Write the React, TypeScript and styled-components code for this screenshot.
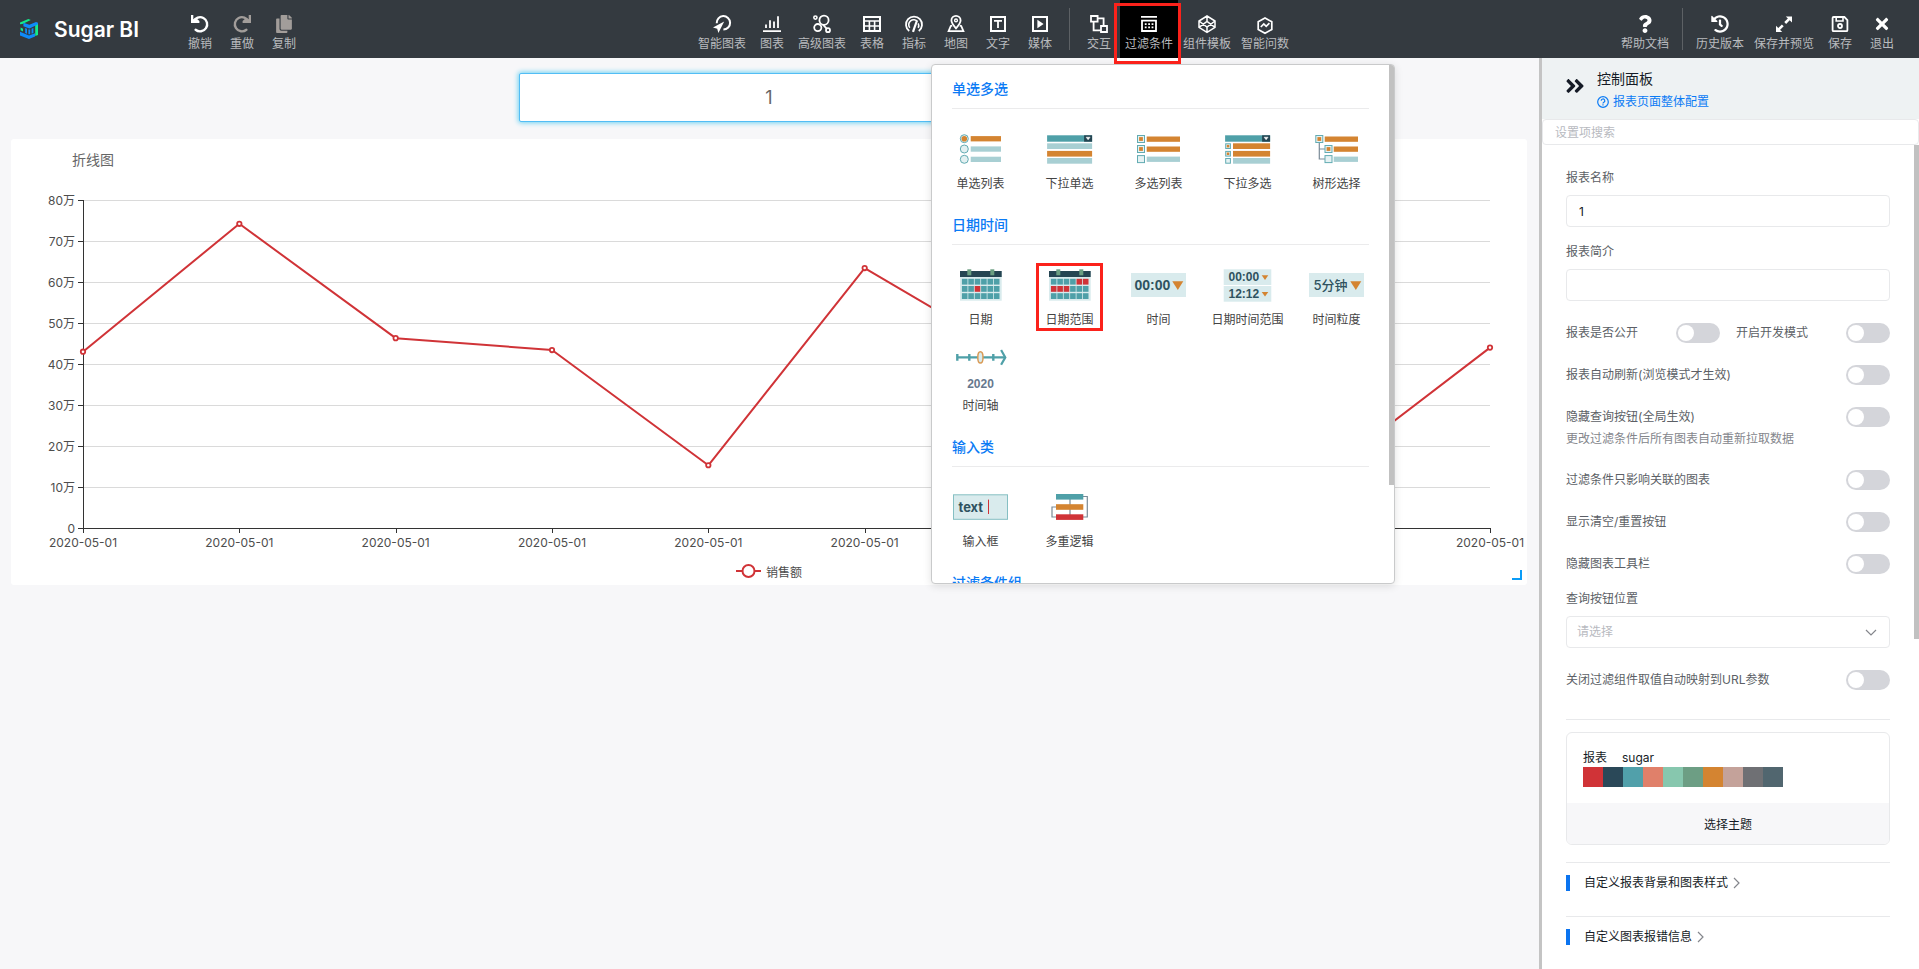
import React, { useEffect, useRef, useState } from 'react';
import styled, { createGlobalStyle } from 'styled-components';
import { FaAngleDoubleRight, FaCopy, FaHistory, FaQuestion, FaTimes } from 'react-icons/fa';

const color = {
  bar: '#343a40',
  canvas: '#f7f7f9',
  blue: '#0b7bf5',
  red: '#fb221b',
  line: '#e8e9eb',
  teal: '#4fa0a8',
  pale: '#a8cfd3',
  ice: '#d9ebed',
  orange: '#d48431',
  navy: '#254552',
  brick: '#d03337',
};

const GlobalStyle = createGlobalStyle`
  *, *::before, *::after { box-sizing: border-box; }
  body {
    margin: 0;
    font-family: Inter, "Noto Sans CJK SC", sans-serif;
    font-size: 12px;
    color: #151b26;
    background: ${color.canvas};
  }
  button, input, select { font: inherit; color: inherit; }
  h1, h2, h3, p { margin: 0; font-weight: 400; }
`;

/* ---------- page frame ---------- */

const Page = styled.div`
  display: flex;
  flex-direction: column;
  height: 100vh;
`;

const Toolbar = styled.header`
  display: flex;
  flex: none;
  height: 58px;
  padding-right: 16px;
  background: ${color.bar};
`;

const Brand = styled.div`
  display: flex;
  align-items: center;
  gap: 15px;
  min-width: 179px;
  padding-left: 19px;
`;

const BrandName = styled.h1`
  font-size: 21px;
  font-weight: 600;
  color: #fff;
`;

const ToolGroup = styled.nav<{ $center?: boolean }>`
  display: flex;
  margin: ${(p) => (p.$center ? '0 auto' : '0')};
  padding-left: ${(p) => (p.$center ? '66px' : '0')};
`;

const ToolButton = styled.button<{ $active?: boolean; $dim?: boolean }>`
  display: flex;
  flex-direction: column;
  align-items: center;
  gap: 3px;
  min-width: 42px;
  height: 58px;
  padding: 15px 5px 0;
  border: 0;
  background: ${(p) => (p.$active ? '#000' : 'transparent')};
  color: ${(p) => (p.$dim ? '#a29d9a' : '#fff')};
  cursor: pointer;
  svg { display: block; overflow: visible; }
`;

const ToolLabel = styled.span`
  line-height: 16px;
  white-space: nowrap;
  color: #b9bbbe;
`;

const ToolDivider = styled.span`
  width: 1px;
  height: 42px;
  margin: 8px;
  background: #5d6165;
`;

const Anchor = styled.div`
  position: relative;
`;

const ToolMarker = styled.span`
  position: absolute;
  z-index: 3;
  inset: 3px -3px -6px -6px;
  border: 3px solid ${color.red};
  box-shadow: inset 0 -3px #fff;
  pointer-events: none;
`;

const Body = styled.div`
  display: flex;
  flex: 1;
  min-height: 0;
`;

/* ---------- canvas ---------- */

const Canvas = styled.main`
  flex: 1;
  min-width: 0;
  padding: 15px 12px 0 11px;
`;

const TitleInput = styled.input`
  display: block;
  width: 500px;
  height: 49px;
  margin: 0 auto 17px;
  border: 1px solid #52bdf5;
  border-radius: 2px;
  outline: 0;
  background: #fff;
  box-shadow: 0 0 5px 1px #6fd3f2;
  font-size: 18px;
  text-align: center;
  color: #666;
`;

const ChartCard = styled.section`
  position: relative;
  padding-bottom: 4px;
  border-radius: 3px;
  background: #fff;
`;

const ChartTitle = styled.h2`
  padding: 10px 61px 0;
  font-size: 14px;
  line-height: 22px;
  color: #666;
`;

const Plot = styled.div`
  height: 390px;
  svg { display: block; }
`;

const Legend = styled.div`
  display: flex;
  align-items: center;
  justify-content: center;
  gap: 5px;
  height: 20px;
  color: #4d4d4d;
`;

const ResizeCorner = styled.span`
  position: absolute;
  right: 5px;
  bottom: 5px;
  width: 10px;
  height: 10px;
  border: solid #0a9cf7;
  border-width: 0 2px 2px 0;
`;

const AXIS_LEFT = 72;
const AXIS_RIGHT = 37;
const AXIS_TOP = 29;
const STEP = 41;
const VALUES = [43, 74.2, 46.3, 43.4, 15.3, 63.4, 41, 26, 14.8, 44];

function LineChart() {
  const box = useRef<HTMLDivElement>(null);
  const [width, setWidth] = useState(1516);

  useEffect(() => {
    const el = box.current;
    if (!el) return;
    const read = () => setWidth(el.clientWidth);
    read();
    const observer = new ResizeObserver(read);
    observer.observe(el);
    return () => observer.disconnect();
  }, []);

  const bottom = AXIS_TOP + STEP * 8;
  const right = width - AXIS_RIGHT;
  const xOf = (i: number) => AXIS_LEFT + ((right - AXIS_LEFT) * i) / (VALUES.length - 1);
  const yOf = (v: number) => bottom - (v * STEP) / 10;
  const crisp = (n: number) => Math.round(n) + 0.5;
  const points = VALUES.map((v, i) => `${xOf(i)},${yOf(v)}`).join(' ');

  return (
    <Plot ref={box}>
      <svg width={width} height={390} fontSize={12} fill="#4d4d4d" role="img" aria-label="折线图">
        {Array.from({ length: 9 }, (_, i) => {
          const y = bottom - i * STEP + 0.5;
          return (
            <g key={i}>
              {i > 0 && <line x1={AXIS_LEFT} x2={right} y1={y} y2={y} stroke="#dadada" />}
              <line x1={AXIS_LEFT - 5} x2={AXIS_LEFT} y1={y} y2={y} stroke="#333" />
              <text x={AXIS_LEFT - 8} y={y + 4} textAnchor="end">{i ? `${i * 10}万` : '0'}</text>
            </g>
          );
        })}
        <line x1={AXIS_LEFT + 0.5} x2={AXIS_LEFT + 0.5} y1={AXIS_TOP} y2={bottom} stroke="#333" />
        <line x1={AXIS_LEFT} x2={right + 1} y1={bottom + 0.5} y2={bottom + 0.5} stroke="#333" />
        {VALUES.map((_, i) => (
          <g key={i}>
            <line x1={crisp(xOf(i))} x2={crisp(xOf(i))} y1={bottom} y2={bottom + 5} stroke="#333" />
            <text x={xOf(i)} y={bottom + 19} textAnchor="middle">2020-05-01</text>
          </g>
        ))}
        <polyline points={points} fill="none" stroke={color.brick} strokeWidth={2} strokeLinejoin="bevel" />
        {VALUES.map((v, i) => (
          <circle key={i} cx={xOf(i)} cy={yOf(v)} r={2.2} fill="#fff" stroke={color.brick} strokeWidth={1.8} />
        ))}
      </svg>
    </Plot>
  );
}

/* ---------- toolbar icons ---------- */

function Icon({ children }: { children: React.ReactNode }) {
  return (
    <svg width={18} height={18} viewBox="0 0 18 18" fill="none" stroke="currentColor" strokeWidth={2} aria-hidden>
      {children}
    </svg>
  );
}

const icons = {
  undo: (
    <Icon>
      <path d="M2.5 6.6A7.1 7.1 0 1 1 4.6 14.8" strokeWidth={2.4} strokeLinecap="round" />
      <path d="M0 0h2.3v4.2L5.6 3.4 8.4 6v2H0z" fill="currentColor" stroke="none" />
    </Icon>
  ),
  redo: (
    <Icon>
      <path d="M15.5 6.6A7.1 7.1 0 1 0 13.4 14.8" strokeWidth={2.4} strokeLinecap="round" />
      <path d="M18 0h-2.3v4.2L12.4 3.4 9.6 6v2H18z" fill="currentColor" stroke="none" />
    </Icon>
  ),
  smart: (
    <Icon>
      <path d="M3.7 8.2a6.7 6.7 0 1 1 6.7 6.3" />
      <path d="M11.2 6.4 0 12.6l4.2 1.2L5.4 18z" fill="currentColor" stroke="none" />
    </Icon>
  ),
  chart: (
    <Icon>
      <path d="M0 16.2h18M3 9.6V13M7 5.2V13M11 6.6V13M15 1.2V13" strokeWidth={1.8} />
    </Icon>
  ),
  advanced: (
    <Icon>
      <circle cx="2.4" cy="2.6" r="1.6" strokeWidth={1.6} />
      <circle cx="11" cy="5.2" r="4.6" strokeWidth={1.8} />
      <circle cx="4.8" cy="12.6" r="3.6" strokeWidth={1.8} />
      <circle cx="15" cy="15.2" r="2" strokeWidth={1.8} />
      <path d="m10 9.6 3.6 4" strokeWidth={1.8} />
    </Icon>
  ),
  table: (
    <Icon>
      <path d="M1 2h16v14H1z" />
      <path d="M1 6h16M1 11h16M6.4 6v10M11.6 6v10" strokeWidth={1.6} />
    </Icon>
  ),
  gauge: (
    <Icon>
      <path d="M4.2 16A8 8 0 1 1 13.8 16" strokeWidth={1.8} />
      <path d="M4.8 12.8A4.8 4.8 0 0 1 12.6 6.6M13.2 8.4a5 5 0 0 1 0 4.4" strokeWidth={1.6} />
      <path d="M8 16.8 11.8 6" strokeWidth={2.2} />
    </Icon>
  ),
  map: (
    <Icon>
      <path d="M9 13.4C6 9.8 4.4 7.6 4.4 5.4a4.6 4.6 0 0 1 9.2 0c0 2.2-1.6 4.4-4.6 8z" strokeWidth={1.8} />
      <circle cx="9" cy="5.4" r="1.4" strokeWidth={1.4} />
      <path d="M5.2 10.6 3.8 11 1.6 16.2h14.8L14.2 11l-1.4-.4" strokeWidth={1.8} />
    </Icon>
  ),
  text: (
    <Icon>
      <path d="M2 2h14v14H2z" />
      <path d="M5 5.8h8M9 5.8V13" strokeWidth={1.8} />
    </Icon>
  ),
  media: (
    <Icon>
      <path d="M2 2h14v14H2z" />
      <path d="M6.4 4.8 12.6 9l-6.2 4.2z" fill="currentColor" stroke="none" />
    </Icon>
  ),
  link: (
    <Icon>
      <path d="M1 1h6.6v5.6H1zM11 11h6v6h-6zM8 3.4h5.6V11M3.6 7v8.4H11" strokeWidth={1.8} />
    </Icon>
  ),
  filter: (
    <Icon>
      <path d="M1 1.9h16M2 5.6h14V16H2z" strokeWidth={1.8} />
      <path d="M4.8 9.2h8.6M4.8 12.4h8.6" strokeWidth={1.8} strokeDasharray="1.8 1.6" />
    </Icon>
  ),
  template: (
    <Icon>
      <path d="M9 1 17 6v6.4L9 17.4 1 12.4V6zM9 1v5.4M9 12v5M1 6l8 6 8-6M1 12.4l8-6 8 6" strokeWidth={1.5} />
    </Icon>
  ),
  ask: (
    <Icon>
      <path d="M9 3l6.8 3.8v7.6L9 18.2l-6.8-3.8V6.8z" strokeWidth={1.7} />
      <path d="m4.8 12 3-3 2.4 2.4 3.2-3.2" strokeWidth={1.7} />
    </Icon>
  ),
  expand: (
    <Icon>
      <path d="M10.8 1.4H17V7.6zM7.2 17H1v-6.2z" fill="currentColor" stroke="none" />
      <path d="m15 3.2-4.8 4.8M3 15.2l4.8-4.8" strokeWidth={2.6} />
    </Icon>
  ),
  save: (
    <Icon>
      <path d="M2.6 2h10.8l3 3v10.2q0 1-1 1H2.6q-1 0-1-1V3q0-1 1-1z" strokeWidth={1.8} />
      <path d="M5.2 2v4H12V2" strokeWidth={1.6} />
      <circle cx="9" cy="11" r="2" strokeWidth={1.8} />
    </Icon>
  ),
};

type Tool = { label: string; icon: React.ReactNode; dim?: boolean };

const editTools: Tool[] = [
  { label: '撤销', icon: icons.undo },
  { label: '重做', icon: icons.redo, dim: true },
  { label: '复制', icon: <FaCopy size={18} />, dim: true },
];

const insertTools: Tool[] = [
  { label: '智能图表', icon: icons.smart },
  { label: '图表', icon: icons.chart },
  { label: '高级图表', icon: icons.advanced },
  { label: '表格', icon: icons.table },
  { label: '指标', icon: icons.gauge },
  { label: '地图', icon: icons.map },
  { label: '文字', icon: icons.text },
  { label: '媒体', icon: icons.media },
];

const pageTools: Tool[] = [
  { label: '历史版本', icon: <FaHistory size={18} /> },
  { label: '保存并预览', icon: icons.expand },
  { label: '保存', icon: icons.save },
  { label: '退出', icon: <FaTimes size={18} /> },
];

function ToolItem({ tool, active }: { tool: Tool; active?: boolean }) {
  return (
    <ToolButton type="button" $dim={tool.dim} $active={active}>
      {tool.icon}
      <ToolLabel>{tool.label}</ToolLabel>
    </ToolButton>
  );
}

function Logo() {
  return (
    <svg width={20} height={20} viewBox="0 0 20 20" aria-hidden>
      <path d="M1 3.4 9.4 0l2.4 1L3.4 5 1 5.2z" fill="#12ea8c" />
      <path d="M16.2 5.6 19 4.4V16l-2.8 1z" fill="#12ea8c" />
      <path d="M1.6 8.6 4 9.8v2.6l-2.4-1.2z" fill="#12ea8c" />
      <path d="M4.4 3.8 10.4 5.8 17 3l2 .8-.2 1.8-8.4 4L4.4 7.2z" fill="#0f8bf9" />
      <path d="M1 12.8 10 16.6l6-2.4v3.4L10 20l-9-3.6z" fill="#0f8bf9" />
      <path d="M6.2 9 8 9.8v5l-1.800-.8zM9.400 10.400h1.800v4.800H9.400zM12.600 9.800l1.800-.8v5l-1.800.8z" fill="#0f8bf9" />
    </svg>
  );
}

/* ---------- filter menu ---------- */

const Menu = styled.div`
  position: absolute;
  z-index: 2;
  top: 64px;
  left: -189px;
  width: 464px;
  height: 520px;
  overflow: hidden;
  padding: 13px 25px 0 20px;
  border: 1px solid #c9cacb;
  border-radius: 4px;
  background: #fff;
  box-shadow: 0 2px 8px rgba(0, 0, 0, 0.12);
`;

const MenuThumb = styled.span`
  position: absolute;
  top: 0;
  right: 0;
  width: 5px;
  height: 81%;
  background: #c1c1c1;
`;

const MenuHeading = styled.h3`
  padding-bottom: 8px;
  border-bottom: 1px solid #ebebec;
  font-size: 14px;
  font-weight: 500;
  line-height: 22px;
  color: ${color.blue};
`;

const MenuGrid = styled.div`
  display: grid;
  grid-template-columns: repeat(5, 1fr);
  grid-auto-rows: 86px;
  margin: 13px -12px 6px -16px;
`;

const MenuItem = styled.button`
  position: relative;
  display: flex;
  flex-direction: column;
  align-items: center;
  gap: 5px;
  padding: 7px 0 0;
  border: 0;
  background: none;
  color: #444;
  line-height: 20px;
  cursor: pointer;
  svg { display: block; flex: none; overflow: visible; }
`;

const ItemMarker = styled.span`
  position: absolute;
  inset: 5px 11px 13px;
  border: 3px solid ${color.red};
  pointer-events: none;
`;

function Art({ children }: { children: React.ReactNode }) {
  return (
    <svg width={56} height={40} viewBox="-0.5 0 56 40" aria-hidden>
      {children}
    </svg>
  );
}

function Bar({ x, y, w, h = 5.3, fill }: { x: number; y: number; w: number; h?: number; fill: string }) {
  return <rect x={x} y={y} width={w} height={h} fill={fill} />;
}

function Tick({ x, y, size = 7, on }: { x: number; y: number; size?: number; on?: boolean }) {
  const inset = size * 0.23;
  return (
    <>
      <rect x={x} y={y} width={size} height={size} fill="#e6f2f3" stroke="#62abb2" />
      {on && <rect x={x + inset} y={y + inset} width={size - 2 * inset} height={size - 2 * inset} fill={color.orange} />}
    </>
  );
}

function SelectHead() {
  return (
    <>
      <Bar x={5.6} y={6.3} w={45} h={6.4} fill={color.teal} />
      <Bar x={42.6} y={6.3} w={8} h={6.4} fill={color.navy} />
      <path d="M44.6 8.2h4l-2 2.6z" fill="#fff" stroke="#fff" strokeWidth={0.5} />
    </>
  );
}

function Caret({ x, y, w, h }: { x: number; y: number; w: number; h: number }) {
  return <path d={`M${x} ${y}h${w}l${-w / 2} ${h}z`} fill={color.orange} />;
}

function CalendarArt({ marked }: { marked: number[] }) {
  return (
    <Art>
      <rect x={7.5} y={6} width={41.7} height={29.7} fill={color.ice} />
      <rect x={7.5} y={6} width={41.7} height={6} fill={color.navy} />
      <rect x={14.8} y={4.3} width={4} height={6} fill="#6b9f82" />
      <rect x={37.8} y={4.3} width={4} height={6} fill="#6b9f82" />
      {Array.from({ length: 18 }, (_, i) => (
        <rect
          key={i}
          x={9.4 + (i % 6) * 6.4}
          y={13.8 + Math.floor(i / 6) * 7.2}
          width={5.6}
          height={5.8}
          fill={marked.includes(i) ? color.brick : color.teal}
        />
      ))}
    </Art>
  );
}

const digits = { fontFamily: 'Liberation Sans, sans-serif', fontWeight: 700, fill: '#2f5260' };

const art = {
  radio: (
    <Art>
      {[9.7, 20, 30.3].map((y, i) => (
        <g key={y}>
          <circle cx={11.8} cy={y} r={4} fill="#e3f0f1" stroke="#62abb2" />
          {i === 0 && <circle cx={11.8} cy={y} r={2.8} fill={color.orange} />}
          <Bar x={18.2} y={y - 2.6} w={30.3} fill={i === 0 ? color.orange : color.pale} />
        </g>
      ))}
    </Art>
  ),
  select: (
    <Art>
      <SelectHead />
      <Bar x={5.6} y={14.3} w={45} h={5.7} fill={color.pale} />
      <Bar x={5.6} y={21.9} w={45} h={5.7} fill={color.orange} />
      <Bar x={5.6} y={29} w={45} h={5.7} fill={color.pale} />
    </Art>
  ),
  checks: (
    <Art>
      {[6.5, 16.5, 26.6].map((y, i) => (
        <g key={y}>
          <Tick x={7} y={y} on={i < 2} />
          <Bar x={16.2} y={y + 1} w={33.3} fill={i < 2 ? color.orange : color.pale} />
        </g>
      ))}
    </Art>
  ),
  multi: (
    <Art>
      <SelectHead />
      {[14.3, 21.9, 29].map((y, i) => (
        <g key={y}>
          <Tick x={6.2} y={y + 0.5} size={4.7} on={i < 2} />
          <Bar x={13.5} y={y} w={37.1} h={5.7} fill={i < 2 ? color.orange : color.pale} />
        </g>
      ))}
    </Art>
  ),
  tree: (
    <Art>
      <path d="M10.8 13v17h6M10.8 20h6" fill="none" stroke="#7a8b97" strokeWidth={1.2} />
      <Tick x={7.3} y={6.5} on />
      <Tick x={16.5} y={16.5} on />
      <Tick x={16.5} y={26.6} />
      <Bar x={16.2} y={7.5} w={33.3} fill={color.orange} />
      <Bar x={25.2} y={17.5} w={24.3} fill={color.orange} />
      <Bar x={25.2} y={27.6} w={24.3} fill={color.pale} />
    </Art>
  ),
  date: <CalendarArt marked={[8]} />,
  range: <CalendarArt marked={[4, 5, 6, 7, 8]} />,
  time: (
    <Art>
      <rect x={0.5} y={8} width={55} height={24} fill={color.ice} />
      <text x={4} y={25} fontSize={14} {...digits}>00:00</text>
      <Caret x={41.8} y={16.3} w={11} h={8.7} />
    </Art>
  ),
  timeRange: (
    <Art>
      <rect x={4.2} y={4.3} width={47.6} height={15.7} fill={color.ice} />
      <rect x={4.2} y={21} width={47.6} height={15.7} fill={color.ice} />
      <text x={9} y={16} fontSize={12} {...digits}>00:00</text>
      <text x={9} y={33} fontSize={12} {...digits}>12:12</text>
      <Caret x={42.2} y={10.3} w={6.6} h={4.6} />
      <Caret x={42.2} y={27} w={6.6} h={4.6} />
    </Art>
  ),
  grain: (
    <Art>
      <rect x={0.5} y={8} width={55} height={24} fill={color.ice} />
      <text x={5} y={25} fontSize={13} fontWeight={500} fill="#2f5260">5分钟</text>
      <Caret x={41.8} y={16.3} w={11} h={8.7} />
    </Art>
  ),
  axis: (
    <Art>
      <path d="M4 6.4h48M4.8 3v6.8M16.8 3v6.8M40.8 3v6.8" stroke={color.teal} strokeWidth={2.4} />
      <path d="m48.6-1 4.2 7.4-4.2 7.4" fill="none" stroke={color.teal} strokeWidth={2.2} />
      <ellipse cx={27.9} cy={6.4} rx={2.6} ry={5.6} fill={color.ice} stroke="#d99a55" strokeWidth={1.5} />
      <text x={28} y={37} fontSize={12} fontFamily="Liberation Sans, sans-serif" fontWeight={700} fill="#66788e" textAnchor="middle">2020</text>
    </Art>
  ),
  input: (
    <Art>
      <rect x={1} y={7.8} width={54} height={24.5} fill={color.ice} stroke="#85bfc3" />
      <text x={6} y={25} fontSize={13} fontWeight={700} fill="#2f5260">text</text>
      <path d="M36 12.6V27" stroke={color.brick} />
    </Art>
  ),
  logic: (
    <Art>
      <path d="M28.5 10v20M41 9.5h4.8V30H41M15 20h-4.5v10H15" fill="none" stroke="#7a8b97" strokeWidth={1.2} />
      <Bar x={14.5} y={7} w={27.3} h={5.6} fill={color.teal} />
      <Bar x={14.5} y={17.2} w={27.3} h={5.6} fill={color.orange} />
      <Bar x={14.5} y={27.3} w={27.3} h={5.6} fill={color.brick} />
    </Art>
  ),
};

type MenuSection = { title: string; items: { label: string; art: React.ReactNode; marked?: boolean }[] };

const menuSections: MenuSection[] = [
  {
    title: '单选多选',
    items: [
      { label: '单选列表', art: art.radio },
      { label: '下拉单选', art: art.select },
      { label: '多选列表', art: art.checks },
      { label: '下拉多选', art: art.multi },
      { label: '树形选择', art: art.tree },
    ],
  },
  {
    title: '日期时间',
    items: [
      { label: '日期', art: art.date },
      { label: '日期范围', art: art.range, marked: true },
      { label: '时间', art: art.time },
      { label: '日期时间范围', art: art.timeRange },
      { label: '时间粒度', art: art.grain },
      { label: '时间轴', art: art.axis },
    ],
  },
  {
    title: '输入类',
    items: [
      { label: '输入框', art: art.input },
      { label: '多重逻辑', art: art.logic },
    ],
  },
  { title: '过滤条件组', items: [] },
];

function FilterMenu() {
  return (
    <Menu>
      {menuSections.map((section) => (
        <section key={section.title}>
          <MenuHeading>{section.title}</MenuHeading>
          <MenuGrid>
            {section.items.map((item) => (
              <MenuItem type="button" key={item.label}>
                {item.art}
                {item.label}
                {item.marked && <ItemMarker />}
              </MenuItem>
            ))}
          </MenuGrid>
        </section>
      ))}
      <MenuThumb />
    </Menu>
  );
}

/* ---------- control panel ---------- */

const Panel = styled.aside`
  display: flex;
  flex: none;
  flex-direction: column;
  width: 380px;
  border-left: 3px solid #c4c4c4;
  background: #fff;
`;

const PanelHeader = styled.div`
  display: flex;
  align-items: flex-start;
  gap: 11px;
  height: 61px;
  padding: 10px 0 0 22px;
  background: #eef2f3;
`;

const CollapseButton = styled.button`
  display: flex;
  padding: 7px 0 0;
  border: 0;
  background: none;
  cursor: pointer;
`;

const PanelTitle = styled.h2`
  font-size: 14px;
  line-height: 22px;
`;

const HelpLink = styled.a`
  display: flex;
  align-items: center;
  gap: 4px;
  line-height: 24px;
  color: ${color.blue};
  text-decoration: none;
`;

const SearchInput = styled.input`
  flex: none;
  height: 26px;
  padding: 0 12px;
  border: 1px solid ${color.line};
  border-radius: 4px;
  outline: 0;
  &::placeholder { color: #b8babf; opacity: 1; }
`;

const PanelScroll = styled.div`
  display: flex;
  flex: 1;
  min-height: 0;
  overflow: hidden;
`;

const PanelThumb = styled.span`
  flex: none;
  width: 5px;
  height: 60%;
  background: #c1c1c1;
`;

const Form = styled.form`
  flex: 1;
  min-width: 0;
  padding: 22px 24px 0;
`;

const Field = styled.label`
  display: block;
  margin-bottom: 14px;
  padding-top: 1px;
  line-height: 20px;
  color: #5c5f66;
`;

const TextInput = styled.input`
  display: block;
  width: 100%;
  height: 32px;
  margin-top: 7px;
  padding: 0 12px;
  border: 1px solid ${color.line};
  border-radius: 4px;
  outline: 0;
  background: #fff;
  color: #151b26;
`;

const SelectBox = styled.span`
  position: relative;
  display: block;
  margin-top: 7px;
  svg {
    position: absolute;
    top: 13px;
    right: 13px;
    pointer-events: none;
  }
`;

const Select = styled.select`
  display: block;
  width: 100%;
  height: 32px;
  padding: 0 10px;
  border: 1px solid ${color.line};
  border-radius: 4px;
  appearance: none;
  background: #fff;
  color: #b8babf;
`;

const SwitchRows = styled.div`
  display: flex;
  flex-direction: column;
  gap: 22px;
  padding-top: 8px;
  padding-bottom: 14px;
`;

const SwitchPair = styled.div`
  display: grid;
  grid-template-columns: 1fr 1fr;
  gap: 16px;
`;

const SwitchLabel = styled.label`
  display: flex;
  align-items: center;
  justify-content: space-between;
  line-height: 20px;
  color: #5c5f66;
`;

const Hint = styled.p`
  margin: 2px 0 -1px;
  line-height: 20px;
  color: #84868c;
`;

const Switch = styled.input`
  appearance: none;
  width: 44px;
  height: 20px;
  margin: 0;
  padding: 2px;
  border-radius: 10px;
  background: #d4d5da;
  cursor: pointer;
  &::before {
    content: '';
    display: block;
    width: 16px;
    height: 16px;
    border-radius: 50%;
    background: #fff;
  }
  &:checked { background: ${color.blue}; }
  &:checked::before { margin-left: 24px; }
`;

const ThemeBlock = styled.section`
  margin-top: 15px;
  padding: 12px 0 17px;
  border-top: 1px solid ${color.line};
`;

const ThemeCard = styled.div`
  overflow: hidden;
  border: 1px solid ${color.line};
  border-radius: 6px;
`;

const ThemeInfo = styled.div`
  padding: 16px;
  line-height: 18px;
`;

const ThemeNames = styled.div`
  display: flex;
  gap: 15px;
`;

const Palette = styled.div`
  display: flex;
`;

const Swatch = styled.span<{ $fill: string }>`
  width: 20px;
  height: 20px;
  background: ${(p) => p.$fill};
`;

const ThemeButton = styled.button`
  display: block;
  width: 100%;
  height: 41px;
  border: 0;
  background: ${color.canvas};
  cursor: pointer;
`;

const Fold = styled.section`
  padding: 12px 0 25px;
  border-top: 1px solid ${color.line};
`;

const FoldButton = styled.button`
  display: flex;
  align-items: center;
  gap: 5px;
  height: 16px;
  padding: 0 0 0 14px;
  border: 0;
  border-left: 4px solid #0b74f0;
  background: none;
  line-height: 16px;
  cursor: pointer;
`;

const swatches = ['#d03337', '#2a4858', '#51a0aa', '#e0806a', '#87c7ae', '#6d9e84', '#d48431', '#c4a29a', '#6f7074', '#51666f'];

function SwitchField({ label }: { label: string }) {
  return (
    <SwitchLabel>
      {label}
      <Switch type="checkbox" role="switch" />
    </SwitchLabel>
  );
}

function FoldSection({ title }: { title: string }) {
  return (
    <Fold>
      <FoldButton type="button">
        {title}
        <svg width={7} height={12} viewBox="0 0 7 12" fill="none" stroke="#84868c" strokeWidth={1.2} aria-hidden>
          <path d="m1 1 5 5-5 5" />
        </svg>
      </FoldButton>
    </Fold>
  );
}

function ControlPanel() {
  return (
    <Panel>
      <PanelHeader>
        <CollapseButton type="button" aria-label="收起">
          <FaAngleDoubleRight size={22} />
        </CollapseButton>
        <div>
          <PanelTitle>控制面板</PanelTitle>
          <HelpLink href="#help">
            <svg width={12} height={12} viewBox="0 0 12 12" fill="none" stroke="currentColor" strokeWidth={1.2} aria-hidden>
              <circle cx="6" cy="6" r="5.3" />
              <path d="M4.2 4.8a1.8 1.8 0 1 1 2.7 1.500q-.9.5-.9 1.200" />
              <path d="M6 8.2v1.3" />
            </svg>
            报表页面整体配置
          </HelpLink>
        </div>
      </PanelHeader>
      <SearchInput type="search" placeholder="设置项搜索" aria-label="设置项搜索" />
      <PanelScroll>
        <Form>
          <Field>
            报表名称
            <TextInput defaultValue="1" />
          </Field>
          <Field>
            报表简介
            <TextInput />
          </Field>
          <SwitchRows>
            <SwitchPair>
              <SwitchField label="报表是否公开" />
              <SwitchField label="开启开发模式" />
            </SwitchPair>
            <SwitchField label="报表自动刷新(浏览模式才生效)" />
            <div>
              <SwitchField label="隐藏查询按钮(全局生效)" />
              <Hint>更改过滤条件后所有图表自动重新拉取数据</Hint>
            </div>
            <SwitchField label="过滤条件只影响关联的图表" />
            <SwitchField label="显示清空/重置按钮" />
            <SwitchField label="隐藏图表工具栏" />
          </SwitchRows>
          <Field>
            查询按钮位置
            <SelectBox>
              <Select defaultValue="">
                <option value="">请选择</option>
              </Select>
              <svg width={12} height={7} viewBox="0 0 12 7" fill="none" stroke="#84868c" strokeWidth={1.2} aria-hidden>
                <path d="m1 1 5 5 5-5" />
              </svg>
            </SelectBox>
          </Field>
          <SwitchRows>
            <SwitchField label="关闭过滤组件取值自动映射到URL参数" />
          </SwitchRows>
          <ThemeBlock>
            <ThemeCard>
              <ThemeInfo>
                <ThemeNames>
                  <span>报表</span>
                  <span>sugar</span>
                </ThemeNames>
                <Palette>
                  {swatches.map((fill) => (
                    <Swatch key={fill} $fill={fill} />
                  ))}
                </Palette>
              </ThemeInfo>
              <ThemeButton type="button">选择主题</ThemeButton>
            </ThemeCard>
          </ThemeBlock>
          <FoldSection title="自定义报表背景和图表样式" />
          <FoldSection title="自定义图表报错信息" />
        </Form>
        <PanelThumb />
      </PanelScroll>
    </Panel>
  );
}

/* ---------- app ---------- */

export default function App() {
  return (
    <Page>
      <GlobalStyle />
      <Toolbar>
        <Brand>
          <Logo />
          <BrandName>Sugar BI</BrandName>
        </Brand>
        <ToolGroup>
          {editTools.map((tool) => (
            <ToolItem key={tool.label} tool={tool} />
          ))}
        </ToolGroup>
        <ToolGroup $center>
          {insertTools.map((tool) => (
            <ToolItem key={tool.label} tool={tool} />
          ))}
          <ToolDivider />
          <ToolItem tool={{ label: '交互', icon: icons.link }} />
          <Anchor>
            <ToolItem tool={{ label: '过滤条件', icon: icons.filter }} active />
            <ToolMarker />
            <FilterMenu />
          </Anchor>
          <ToolItem tool={{ label: '组件模板', icon: icons.template }} />
          <ToolItem tool={{ label: '智能问数', icon: icons.ask }} />
        </ToolGroup>
        <ToolGroup>
          <ToolItem tool={{ label: '帮助文档', icon: <FaQuestion size={18} /> }} />
          <ToolDivider />
          {pageTools.map((tool) => (
            <ToolItem key={tool.label} tool={tool} />
          ))}
        </ToolGroup>
      </Toolbar>
      <Body>
        <Canvas>
          <TitleInput defaultValue="1" aria-label="报表标题" />
          <ChartCard>
            <ChartTitle>折线图</ChartTitle>
            <LineChart />
            <Legend>
              <svg width={25} height={14} viewBox="0 0 25 14" fill="#fff" stroke={color.brick} strokeWidth={2} aria-hidden>
                <path d="M0 7h25" />
                <circle cx="12.5" cy="7" r="6" />
              </svg>
              销售额
            </Legend>
            <ResizeCorner />
          </ChartCard>
        </Canvas>
        <ControlPanel />
      </Body>
    </Page>
  );
}
